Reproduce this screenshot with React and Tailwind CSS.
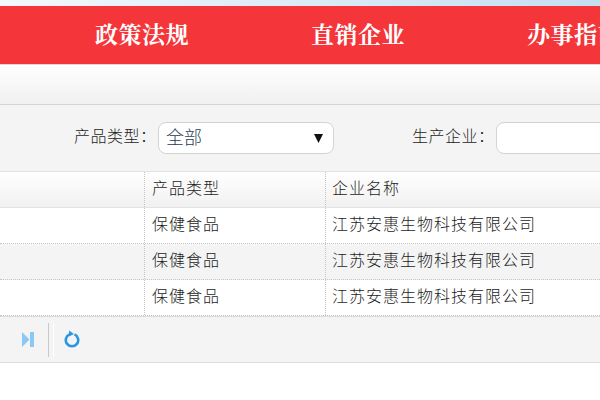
import React from 'react';

const rows = [0, 1, 2];

const navItems = ['政策法规', '直销企业', '办事指南'];

const App = () => {
    return (
        <div className="w-[600px] h-[400px] overflow-hidden bg-white font-['Liberation_Sans','Noto_Sans_CJK_SC',sans-serif] text-[#1c1c1c]">
            {/* top strip */}
            <div className="h-[6px] bg-gradient-to-r from-[#f4f8fc] to-[#c4dff2]" />

            {/* nav */}
            <div className="h-[59px] bg-[#f43539] border-b border-[#e0d8d8] flex items-center pl-[95px] gap-[122px] whitespace-nowrap overflow-hidden">
                {navItems.map((item) => (
                    <span key={item} className="text-[23px] tracking-[0.5px] leading-none font-bold text-white font-['Liberation_Serif','Noto_Serif_CJK_SC','Noto_Sans_CJK_SC',serif] shrink-0">{item}</span>
                ))}
            </div>

            {/* title bar */}
            <div className="h-[40px] bg-gradient-to-b from-white to-[#f0f0f0] border-b border-[#d4d4d4]" />

            {/* filters */}
            <div className="h-[66px] bg-[#f4f4f4] flex items-center pl-[74px] whitespace-nowrap overflow-hidden">
                <span className="text-[16px] tracking-[0.5px] w-[84px] shrink-0 font-light pb-[3px]">产品类型：</span>
                <div className="w-[176px] h-[32px] shrink-0 bg-white border border-[#d3d3d3] rounded-[8px] flex items-center justify-between pl-[7px] pr-[10px]">
                    <span className="text-[18px] font-light text-[#2a3a58] pt-[1px]">全部</span>
                    <svg width="9" height="10" viewBox="0 0 9 10"><path d="M0 1h9L4.5 10z" fill="#111" /></svg>
                </div>
                <span className="text-[16px] tracking-[0.5px] ml-[78px] w-[84px] shrink-0 font-light pb-[3px]">生产企业：</span>
                <div className="w-[120px] h-[32px] shrink-0 bg-white border border-[#d3d3d3] rounded-[8px]" />
            </div>

            {/* grid header */}
            <div className="h-[37px] flex border-y border-[#e2e2e2] bg-gradient-to-b from-white to-[#f1f1f1]">
                <div className="w-[144px] shrink-0" />
                <div className="w-[181px] shrink-0 border-l border-dotted border-[#c4c4c4] pl-[7px] pb-[2px] flex items-center text-[16px] tracking-[1px] font-light">产品类型</div>
                <div className="flex-1 border-l border-dotted border-[#c4c4c4] pl-[6px] pb-[2px] flex items-center text-[16px] tracking-[1px] font-light">企业名称</div>
            </div>

            {/* grid rows */}
            {rows.map((r) => (
                <div key={r} className={`h-[36px] flex border-b border-dotted border-[#c4c4c4] ${r === 1 ? 'bg-[#f4f4f4]' : 'bg-white'}`}>
                    <div className="w-[144px] shrink-0" />
                    <div className="w-[181px] shrink-0 border-l border-dotted border-[#c4c4c4] pl-[7px] pb-[1px] flex items-center text-[16px] tracking-[1px] font-light">保健食品</div>
                    <div className="flex-1 border-l border-dotted border-[#c4c4c4] pl-[6px] pb-[1px] flex items-center text-[16px] tracking-[1px] whitespace-nowrap font-light">江苏安惠生物科技有限公司</div>
                </div>
            ))}

            {/* pager */}
            <div className="h-[47px] bg-[#f4f4f4] border-y border-[#dcdcdc] flex items-center pl-[22px]">
                <svg width="12" height="15" viewBox="0 0 12 15"><path d="M0 0l7.5 7.5L0 15z M8 0h4v15H8z" fill="#8cc8f4" /></svg>
                <div className="ml-[14px] w-[1px] h-[34px] bg-[#c8c8c8]" />
                <div className="w-[1px] h-[34px] ml-[4px] bg-white" />
                <svg className="ml-[10px] mb-[2px]" width="16" height="18" viewBox="0 0 16 18" fill="none"><path d="M5.5 4.4a6.2 6.2 0 1 0 5 0" stroke="#2b97e3" strokeWidth="2.6" /><path d="M5 0.5l5 3.5-5 2.5z" fill="#2b97e3" /></svg>
            </div>
        </div>
    );
};

export default App;
